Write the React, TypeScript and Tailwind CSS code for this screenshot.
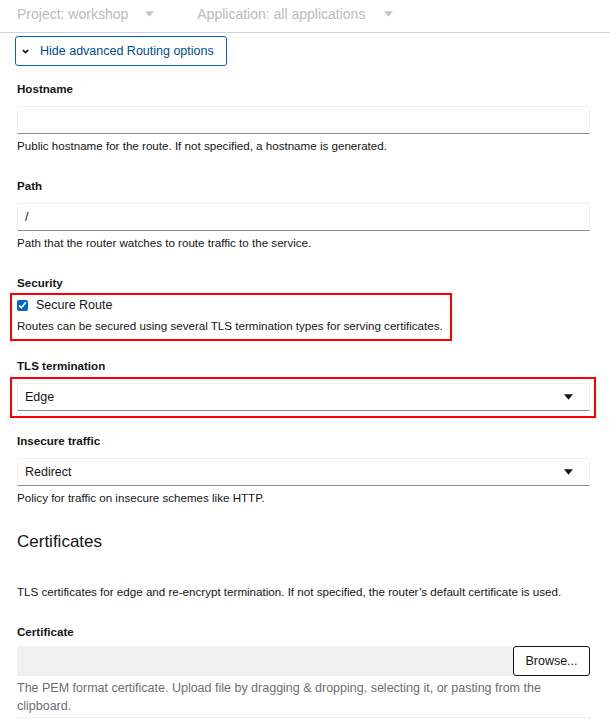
import { ChevronDown } from "lucide-react";

function Caret({ className = "" }: { className?: string }) {
  return (
    <svg viewBox="0 0 10 6" className={`w-[9px] h-[6px] ${className}`} fill="currentColor">
      <path d="M0 0h10L5 6z" />
    </svg>
  );
}

function Label({ children }: { children: React.ReactNode }) {
  return <div className="text-[11.6px] font-bold text-[#151515] leading-[18px] mb-[8px]">{children}</div>;
}

function Help({ children }: { children: React.ReactNode }) {
  return <div className="text-[11.6px] text-[#151515] leading-[18px] mt-[3px]">{children}</div>;
}

function TextInput({ value = "" }: { value?: string }) {
  return (
    <div className="h-[28px] border border-[#f0f0f0] border-b-[#8a8d90] flex items-center px-[7px] text-[12.5px] text-[#151515]">
      {value}
    </div>
  );
}

function Select({ value }: { value: string }) {
  return (
    <div className="h-[28px] border border-[#f0f0f0] border-b-[#8a8d90] flex items-center justify-between pl-[7px] pr-[16px] text-[12.5px] text-[#151515]">
      <span>{value}</span>
      <Caret className="text-[#151515]" />
    </div>
  );
}

export default function App() {
  return (
    <div className="w-[610px] h-[720px] overflow-hidden bg-white" style={{ fontFamily: '"Liberation Sans", Arial, sans-serif' }}>
      <div className="h-[33px] pb-[4px] border-b border-[#d2d2d2] flex items-center pl-[17px] text-[14px] text-[#b8bbbe]">
        <span>Project: workshop</span>
        <Caret className="ml-[17px] text-[#c7c7c7]" />
        <span className="ml-[43px]">Application: all applications</span>
        <Caret className="ml-[19px] text-[#c7c7c7]" />
      </div>

      <div className="px-[17px] pr-[20px]">
        <button
          type="button"
          className="mt-[3px] -ml-[2px] h-[30px] w-[212px] border border-[#0066cc] rounded-[3px] flex items-center gap-[10px] pl-[5px] text-[12.5px] text-[#004b95]"
        >
          <ChevronDown className="w-[9px] h-[9px] text-[#151515]" strokeWidth={4} />
          Hide advanced Routing options
        </button>

        <div className="mt-[14px]">
          <Label>Hostname</Label>
          <TextInput />
          <Help>Public hostname for the route. If not specified, a hostname is generated.</Help>
        </div>

        <div className="mt-[22px]">
          <Label>Path</Label>
          <TextInput value="/" />
          <Help>Path that the router watches to route traffic to the service.</Help>
        </div>

        <div className="mt-[22px]">
          <Label>Security</Label>
          <div className="-ml-[7px] -mt-[7px] w-[442px] border-2 border-[#ff0000] pl-[5px] pt-[1px] pb-[4px]">
            <label className="flex items-center gap-[8px] text-[12.5px] text-[#151515] leading-[18px]">
              <input type="checkbox" defaultChecked className="w-[11px] h-[11px] accent-[#0066cc] m-0" />
              Secure Route
            </label>
            <Help>Routes can be secured using several TLS termination types for serving certificates.</Help>
          </div>
        </div>

        <div className="mt-[16px]">
          <Label>TLS termination</Label>
          <div className="-ml-[7px] -mt-[6px] -mr-[6px] border-2 border-[#ff0000] pl-[5px] pr-[4px] pt-[4px] pb-[5px]">
            <Select value="Edge" />
          </div>
        </div>

        <div className="mt-[14px]">
          <Label>Insecure traffic</Label>
          <Select value="Redirect" />
          <Help>Policy for traffic on insecure schemes like HTTP.</Help>
        </div>

        <div className="mt-[22px] text-[17px] text-[#151515] leading-[26px]">Certificates</div>

        <div className="mt-[28px]">
          <Help>TLS certificates for edge and re-encrypt termination. If not specified, the router’s default certificate is used.</Help>
        </div>

        <div className="mt-[22px]">
          <Label>Certificate</Label>
          <div className="flex h-[30px] -mt-[3px]">
            <div className="flex-1 bg-[#f0f0f0]" />
            <button type="button" className="w-[77px] border border-[#151515] rounded-[3px] text-[12.5px] text-[#151515]">
              Browse...
            </button>
          </div>
          <div className="text-[12.5px] text-[#6a6e73] leading-[18px] mt-[3px] max-w-[535px]">
            The PEM format certificate. Upload file by dragging &amp; dropping, selecting it, or pasting from the clipboard.
          </div>
          <div className="mt-[2px] h-[20px] border border-[#f0f0f0]" />
        </div>
      </div>
    </div>
  );
}
